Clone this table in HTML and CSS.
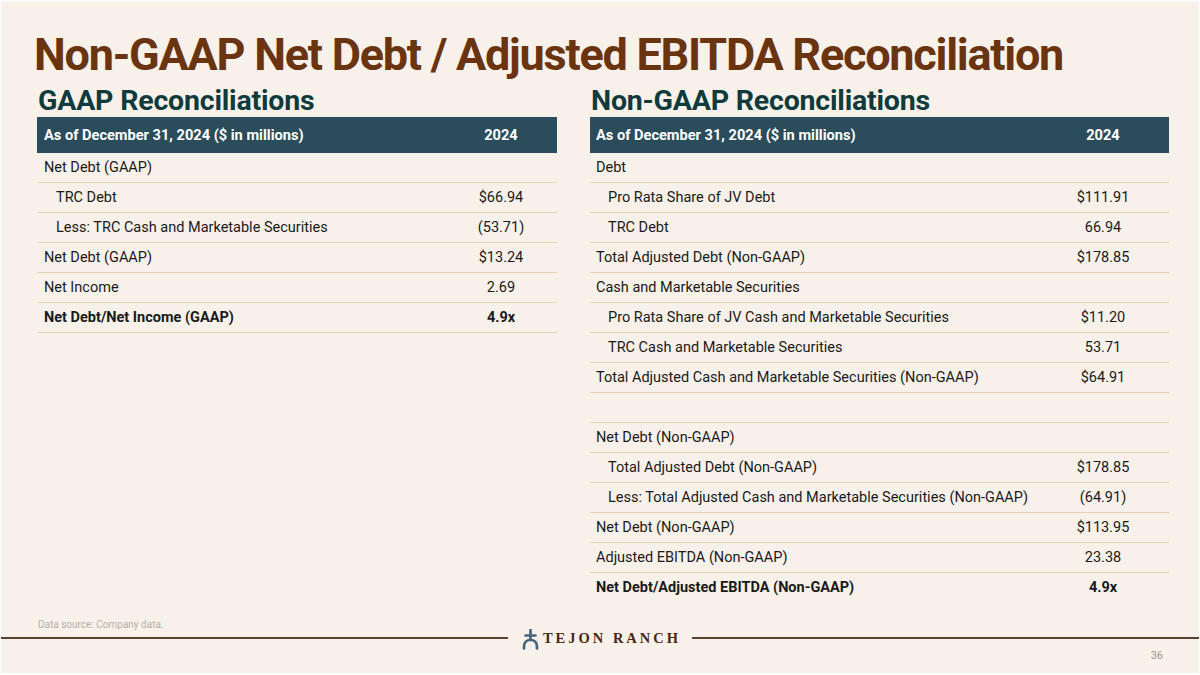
FILE: index.html
```html
<!DOCTYPE html>
<html lang="en">
<head>
<meta charset="utf-8">
<title>Non-GAAP Net Debt / Adjusted EBITDA Reconciliation</title>
<link rel="stylesheet" href="styles.css">
</head>
<body>
<div class="slide">
  <h1 class="title">Non-GAAP Net Debt / Adjusted EBITDA Reconciliation</h1>
  <div class="columns">
    <section class="col col-left">
      <h2 class="subtitle">GAAP Reconciliations</h2>
      <table class="recon recon-left">
        <thead>
          <tr><th class="label">As of December 31, 2024 ($ in millions)</th><th class="val">2024</th></tr>
        </thead>
        <tbody>
          <tr><td class="label">Net Debt (GAAP)</td><td class="val"></td></tr>
          <tr><td class="label indent">TRC Debt</td><td class="val">$66.94</td></tr>
          <tr><td class="label indent">Less: TRC Cash and Marketable Securities</td><td class="val">(53.71)</td></tr>
          <tr><td class="label">Net Debt (GAAP)</td><td class="val">$13.24</td></tr>
          <tr><td class="label">Net Income</td><td class="val">2.69</td></tr>
          <tr class="bold"><td class="label">Net Debt/Net Income (GAAP)</td><td class="val">4.9x</td></tr>
        </tbody>
      </table>
    </section>
    <section class="col col-right">
      <h2 class="subtitle">Non-GAAP Reconciliations</h2>
      <table class="recon recon-right">
        <thead>
          <tr><th class="label">As of December 31, 2024 ($ in millions)</th><th class="val">2024</th></tr>
        </thead>
        <tbody>
          <tr><td class="label">Debt</td><td class="val"></td></tr>
          <tr><td class="label indent">Pro Rata Share of JV Debt</td><td class="val">$111.91</td></tr>
          <tr><td class="label indent">TRC Debt</td><td class="val">66.94</td></tr>
          <tr><td class="label">Total Adjusted Debt (Non-GAAP)</td><td class="val">$178.85</td></tr>
          <tr><td class="label">Cash and Marketable Securities</td><td class="val"></td></tr>
          <tr><td class="label indent">Pro Rata Share of JV Cash and Marketable Securities</td><td class="val">$11.20</td></tr>
          <tr><td class="label indent">TRC Cash and Marketable Securities</td><td class="val">53.71</td></tr>
          <tr><td class="label">Total Adjusted Cash and Marketable Securities (Non-GAAP)</td><td class="val">$64.91</td></tr>
          <tr><td class="label">&nbsp;</td><td class="val"></td></tr>
          <tr><td class="label">Net Debt (Non-GAAP)</td><td class="val"></td></tr>
          <tr><td class="label indent">Total Adjusted Debt (Non-GAAP)</td><td class="val">$178.85</td></tr>
          <tr><td class="label indent">Less: Total Adjusted Cash and Marketable Securities (Non-GAAP)</td><td class="val">(64.91)</td></tr>
          <tr><td class="label">Net Debt (Non-GAAP)</td><td class="val">$113.95</td></tr>
          <tr><td class="label">Adjusted EBITDA (Non-GAAP)</td><td class="val">23.38</td></tr>
          <tr class="bold last"><td class="label">Net Debt/Adjusted EBITDA (Non-GAAP)</td><td class="val">4.9x</td></tr>
        </tbody>
      </table>
    </section>
  </div>
  <footer class="footer">
    <p class="source">Data source: Company data.</p>
    <div class="brand-row">
      <span class="rule"></span>
      <div class="brand">
        <svg class="brand-icon" width="17" height="21" viewBox="0 0 17 21" aria-hidden="true">
          <path d="M8.5 1 V10.5 M3.5 6.5 H13.5 M2 19.5 V17.5 C2 13.5 4.5 11 8.5 11 C12.5 11 15 13.5 15 17.5 V19.5" fill="none" stroke="#45657a" stroke-width="2.7" stroke-linecap="round"/>
        </svg>
        <span class="brand-name">TEJON RANCH</span>
      </div>
      <span class="rule"></span>
    </div>
    <p class="page">36</p>
  </footer>
</div>
</body>
</html>
```

FILE: styles.css
```css
html, body {
  margin: 0;
  padding: 0;
}
body {
  background: #ffffff;
  font-family: "Roboto", "Liberation Sans", sans-serif;
}
.slide {
  width: 1198px;
  height: 672px;
  margin: 1px 0 0 1px;
  background: #f8f1ea;
  display: flex;
  flex-direction: column;
  overflow: hidden;
}
.title {
  margin: 30px 0 0 33px;
  font-weight: 700;
  font-size: 45px;
  line-height: 48px;
  letter-spacing: -1.25px;
  color: #6a3411;
}
.columns {
  display: flex;
  gap: 33px;
  padding-left: 36px;
  margin-top: 7px;
}
.col-left { width: 520px; }
.col-right { width: 579px; }
.subtitle {
  margin: 0 0 1px 1px;
  font-weight: 700;
  font-size: 28.5px;
  line-height: 30px;
  letter-spacing: -0.2px;
  color: #0f3b3d;
}
.recon {
  width: 100%;
  border-collapse: collapse;
  table-layout: fixed;
  font-size: 14.5px;
  color: #1a1a1a;
}
.recon th {
  background: #2b4d5b;
  color: #ffffff;
  font-weight: 700;
  height: 36px;
  padding: 0;
  text-align: left;
  font-size: 14.6px;
}
.recon td {
  height: 29px;
  padding: 0;
  border-bottom: 1px solid #e4d2b6;
}
.recon .label { padding-left: 7px; }
.recon .label.indent { padding-left: 19px; }
.recon .val { text-align: center; }
.recon-left .val { width: 112px; }
.recon-right .val { width: 132px; }
.recon-right .label { padding-left: 6px; }
.recon-right .label.indent { padding-left: 18px; }
.recon tr.bold td { font-weight: 700; }
.recon tr.last td { border-bottom: none; }
.footer {
  margin-top: auto;
  height: 54px;
}
.source {
  margin: 0 0 0 37px;
  font-size: 10px;
  line-height: 12px;
  color: #b5aea7;
}
.brand-row {
  display: flex;
  align-items: center;
  margin-top: -5px;
  margin-left: -1px;
  height: 24px;
}
.rule {
  height: 2px;
  background: #5b4332;
}
.brand-row .rule:first-child { width: 508px; }
.brand-row .rule:last-child { flex: 1; }
.brand {
  width: 184px;
  display: flex;
  align-items: center;
  justify-content: center;
  gap: 4px;
}
.brand-icon { display: block; margin-top: 2px; }
.brand-name {
  font-family: "Liberation Serif", "DejaVu Serif", serif;
  font-weight: 700;
  font-size: 14.5px;
  letter-spacing: 3px;
  margin-right: -3px;
  color: #4a2612;
}
.page {
  margin: -1px 36px 0 0;
  text-align: right;
  font-size: 11px;
  line-height: 14px;
  color: #9c9691;
}
```
